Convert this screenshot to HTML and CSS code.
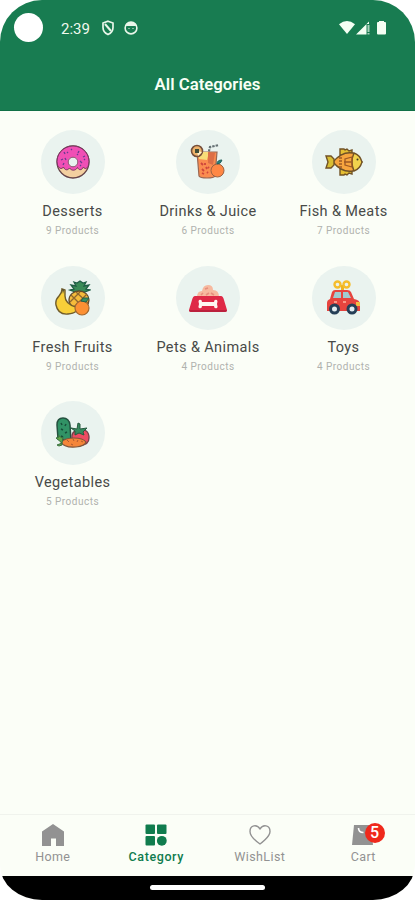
FILE: index.html
```html
<!DOCTYPE html>
<html lang="en">
<head>
<meta charset="utf-8">
<title>All Categories</title>
<link rel="stylesheet" href="styles.css">
</head>
<body>
<div class="phone">
  <header class="header">
    <div class="status">
      <span class="camera"></span>
      <span class="time">2:39</span>
      <svg class="shield" width="14" height="16" viewBox="0 0 14 16" fill="none" stroke="#e8f6e9" stroke-width="1.7"><path d="M7 1.2 12 3v4.5c0 3.2-2 5.7-5 7-3-1.3-5-3.8-5-7V3Z"/><path d="m4 4 6 7" stroke-width="2"/></svg>
      <svg class="face" width="14" height="14" viewBox="0 0 14 14"><circle cx="7" cy="7" r="5.9" fill="none" stroke="#e8f6e9" stroke-width="1.6"/><path d="M2 5Q2.500 1 7 1t5 4Z" fill="#e8f6e9"/><path d="M4.500 7.500h1M8.500 7.500h1" stroke="#e8f6e9"/></svg>
      <svg class="signals" width="50" height="16" viewBox="0 0 50 16" fill="#f5fff4"><path d="M1 4.200Q9 -2 17 4.200L9 14Z"/><path d="M18 14.500 31 1.500v2.500h-2.500v10.500Z"/><path d="M29.500 5H31.500v7h-2Zm0 8h2v1.500h-2Z" opacity=".65"/><path d="M41 1h5v1h1q1 0 1 1v10.500q0 1-1 1h-7q-1 0-1-1V3q0-1 1-1h1Z"/></svg>
    </div>
    <h1>All Categories</h1>
  </header>

  <main class="grid">
    <article class="item">
      <div class="disc"><svg width="36" height="36" viewBox="0 0 36 36"><circle cx="18" cy="18" r="16" fill="#f3cfa0" stroke="#654348" stroke-width="1.300"/><path d="M2.500 21C0 11 8 2 18 2s18 9 15.500 19c-1 4-4 4.500-5 2-2 4-5 3-6 .5-2 3.500-6 3.500-8 .5-2 3-5 2-6-1-2 3-5 1-6-2Z" fill="#f04fb5" stroke="#783660"/><circle cx="18" cy="18" r="4.800" fill="#e8f1ee" stroke="#8d5671"/><path d="m9 8 1 2m6-5 1 1m7 1-1 2m5 4 2-1M6 16l2-1m2-1 1 2m11-6 1 1m2 6 2 2M8 21l1-2m17 2-1 1M13 9l-1-1m17 7 1 1" stroke="#693d91" stroke-width="1.300"/></svg></div>
      <h2>Desserts</h2><p>9 Products</p>
    </article>
    <article class="item">
      <div class="disc"><svg width="36" height="36" viewBox="0 0 36 36"><path d="M18 11 20 3l9-2" fill="none" stroke="#667174" stroke-width="2.200" stroke-dasharray="2.500 1"/><path d="M7 8h20l-2 24q-1 2-8 2T9 32Z" fill="#fa8c50" stroke="#996854" stroke-width="1.200"/><path d="M8 8h11l-2 8-8-1Z" fill="#f8dc78"/><path d="m18 8 7 1-2 12-5-2Z" fill="#dd6e46"/><circle cx="7" cy="7" r="5.500" fill="#efb36b" stroke="#76503c" stroke-width="1.600"/><path d="m7 7 5 1-4 4Z" fill="#fff3d0"/><path d="M5 5h4v4H5Z" fill="#414d37"/><path d="m11 19 2 2m2-2v2m3 2 1 1m-7 1 2 2m2-4 1 2m-5 4 2 1m3-2 1 1" stroke="#cf463b" stroke-width="1.800"/><circle cx="27.500" cy="26.500" r="6.500" fill="#ff8744" stroke="#9c6142"/><path d="M27 20q0-4 5-4-1 4-5 4Z" fill="#26847e" stroke="#24605c"/></svg></div>
      <h2>Drinks &amp; Juice</h2><p>6 Products</p>
    </article>
    <article class="item">
      <div class="disc"><svg width="38" height="30" viewBox="0 0 38 30"><g stroke="#715226" stroke-width="1.400"><path d="M15 8V2h4l1 1 2-1 2 2 3-1v5ZM15 22v6h4l1-1 2 1 2-2 3 1v-5Z" fill="#e5be32"/><path d="M8 15Q17 4 28 6l5 4 4 5-4 5-5 4Q17 26 8 15Z" fill="#f7a53e"/><path d="M1 9h5l3 3v6l-3 3H1l2-6Z" fill="#d8be34"/><path d="M29 6q-4 9 0 18 6-2 8-9-2-7-8-9Z" fill="#f2d34d"/></g><path d="M27 10v10l-7-2v-6ZM26 15h-7M14 11h3m-3 3h3m-3 3h3m-3 3h3" fill="none" stroke="#9e5925" stroke-width="1.300"/><circle cx="32.500" cy="12.500" r="1" fill="#3c3b27"/></svg></div>
      <h2>Fish &amp; Meats</h2><p>7 Products</p>
    </article>
    <article class="item">
      <div class="disc"><svg width="36" height="36" viewBox="0 0 36 36"><path d="m23 13-8-3 4-1-3-4 5 1-2-4 3 1 3-2 3 2 3-1-2 4 5-1-3 4 4 1-8 3Z" fill="#398b57" stroke="#205e46" stroke-width="1.300"/><ellipse cx="24" cy="20" rx="10" ry="9" fill="#f5bb3b" stroke="#60492a" stroke-width="1.300"/><path d="m16 15 11 11m-6-14 12 11M15 22l10-10m-6 15 13-13" stroke="#8f672e" stroke-width="1.300"/><path d="m7 9 3 1v6q0 8 11 11 3 6-8 7-10 1-12-9-1-5 3-9 3-3 3-7Z" fill="#f8cf39" stroke="#705c2b" stroke-width="1.400"/><path d="m7 9 2 1-1 4Z" fill="#514c34"/><circle cx="27" cy="28" r="7" fill="#fc9033" stroke="#a16831" stroke-width="1.200"/><path d="m26 21 2-3h6l-3 4Z" fill="#369265" stroke="#225f4a"/></svg></div>
      <h2>Fresh Fruits</h2><p>9 Products</p>
    </article>
    <article class="item">
      <div class="disc"><svg width="38" height="32" viewBox="0 0 38 32"><path d="M8 15q0-6 5-6 1-6 6-6t5 5q6 0 6 7Z" fill="#f7b99f"/><path d="m12 13 2-2m3 2 3-2m-4-4 3-1m3 5 3 2" stroke="#e68e7d" stroke-width="1.600"/><path d="M6 14h26q2 0 3 4l3 10q0 2-2 2H2q-2 0-2-2l3-10q1-4 3-4Z" fill="#df2946"/><path d="M0 28h38q0 2-2 2H2q-2 0-2-2Z" fill="#bb203d"/><path d="M13 20h12q0-3 3-2 1 1 0 4 1 3 0 4-3 1-3-2H13q0 3-3 2-1-1 0-4-1-3 0-4 3-1 3 2Z" fill="#fff7f1"/></svg></div>
      <h2>Pets &amp; Animals</h2><p>4 Products</p>
    </article>
    <article class="item">
      <div class="disc"><svg width="36" height="36" viewBox="0 0 36 36"><path d="M15 12V5h3v7Z" fill="#edb323"/><circle cx="11.500" cy="4.500" r="3" fill="none" stroke="#f5bd2c" stroke-width="2.400"/><circle cx="20.500" cy="4.500" r="3" fill="none" stroke="#f5bd2c" stroke-width="2.400"/><path d="M1 31V23q0-3 3-4l2-7q1-2 3-2h12q3 0 4 2l3 7q6 1 6 5v7Z" fill="#e6443e"/><path d="m7 18 2-6h6v6Zm10-6h5l3 6h-8Z" fill="#9fccd1"/><path d="M8 22h3m6 0h3" stroke="#ffb49e" stroke-width="1.500"/><path d="M30 22h4v4h-4Z" fill="#f4bf44"/><g fill="#e4edf1" stroke="#263f57" stroke-width="3"><circle cx="8.500" cy="29" r="4"/><circle cx="26" cy="29" r="4"/></g></svg></div>
      <h2>Toys</h2><p>4 Products</p>
    </article>
    <article class="item">
      <div class="disc"><svg width="36" height="36" viewBox="0 0 36 36"><path d="M3 24 2 10q0-7 6-7t7 7l1 16Z" fill="#319265" stroke="#24513f" stroke-width="1.500"/><path d="m6 8 1 2m4-1-1 2m-4 3 2 1m4 2-2 1m-4 3 2 1" stroke="#174e39" stroke-width="1.500"/><path d="M17 24q-1-8 6-9 11-2 11 8 0 7-9 7-6 0-8-6Z" fill="#ed4c62" stroke="#793e48" stroke-width="1.300"/><path d="m16 13 6 1 1-6 2 1v5l7-1-4 4 1 3-5-2-4 2v-4Z" fill="#378a5e" stroke="#285940"/><path d="M6 27q4-4 13-4 9 0 12 4-1 4-10 5-12 1-15-5Z" fill="#f58539" stroke="#80553b" stroke-width="1.200"/><path d="m12 25 2 2m4-3 1 2m4-1-1 2m4-1 2 1m-12 2 2 1" stroke="#ae5931"/><path d="m7 28-6-5 3-1-1-2 4 3 1-1Zm0 0-5 2 2 1 3-1Z" fill="#61a447" stroke="#3c7341"/></svg></div>
      <h2>Vegetables</h2><p>5 Products</p>
    </article>
  </main>

  <nav class="nav">
    <div class="tab"><svg width="26" height="26" viewBox="0 0 26 26" fill="#929292"><path d="M13 2 24 9.500V24h-8v-7.500h-5V24H2V9.500Z"/></svg><span>Home</span></div>
    <div class="tab active"><svg width="26" height="26" viewBox="0 0 26 26" fill="#107c4e"><rect x="2.500" y="2.500" width="9.500" height="9.500" rx="1"/><rect x="14" y="2.500" width="9.500" height="9.500" rx="1"/><rect x="2.500" y="14" width="9.500" height="9.500" rx="1"/><circle cx="18.800" cy="18.800" r="4.900"/></svg><span>Category</span></div>
    <div class="tab"><svg width="26" height="26" viewBox="0 0 26 26" fill="none" stroke="#929292" stroke-width="1.400"><path d="M13 22Q3 15 3 9.500C3 3 10 2 13 7c3-5 10-4 10 2.500C23 15 13 22 13 22Z"/></svg><span>WishList</span></div>
    <div class="tab cart"><svg width="26" height="26" viewBox="0 0 26 26"><path d="M4 3h17l2 20H2Z" fill="#929292"/><path d="M8.500 6q0 4.500 5 4.500" fill="none" stroke="#fff" stroke-width="1.600"/></svg><b class="badge">5</b><span>Cart</span></div>
  </nav>
  <footer class="gesture"><i></i></footer>
</div>
</body>
</html>
```
FILE: styles.css
```css
* { box-sizing: border-box; }
body { margin: 0; background: #fff; font-family: Roboto, sans-serif; }
h1, h2, p { margin: 0; }
svg { display: block; flex: none; }
.phone { width: 415px; height: 900px; display: flex; flex-direction: column; overflow: hidden; border-radius: 42px / 42px 42px 35px 35px; background: #fbfef7; }
.header { height: 111px; flex: none; background: #187c51; border-bottom: 1px solid #107047; }
.status { height: 56px; display: flex; align-items: center; padding: 0 27px 0 14px; }
.camera { width: 29px; height: 29px; border-radius: 50%; background: #fff; margin-top: -2px; }
.time { margin-left: 18px; width: 29px; color: #eff9ee; font-size: 15px; line-height: 18px; padding-top: 1px; }
.shield { margin-left: 11px; }
.face { margin-left: 9px; }
.signals { margin-left: auto; }
.header h1 { color: #f8fff5; font-size: 16.8px; font-weight: 600; line-height: 22px; margin-top: 17px; text-align: center; }
.grid { flex: 1; display: grid; grid-template-columns: repeat(3, 135.5px); grid-auto-rows: 135.7px; align-content: start; justify-content: center; padding: 19px 0 0 1px; }
.item { display: flex; flex-direction: column; align-items: center; white-space: nowrap; }
.disc { width: 64px; height: 64px; flex: none; display: flex; align-items: center; justify-content: center; border-radius: 50%; background: #eaf3ef; }
.item h2 { margin-top: 8px; color: #484a48; font-size: 14.5px; line-height: 20px; font-weight: 400; letter-spacing: .38px; }
.item p { margin-top: 1px; color: #b0b2ae; font-size: 10px; line-height: 16px; letter-spacing: .5px; }
.nav { height: 62px; flex: none; display: grid; grid-template-columns: repeat(4, 1fr); border-top: 1px solid #f0f3ed; padding-left: 1px; }
.tab { display: flex; flex-direction: column; align-items: center; padding-top: 7px; color: #929292; font-size: 12.5px; line-height: 16px; letter-spacing: .4px; }
.tab span { margin-top: 1px; }
.active { color: #107c4e; font-weight: 500; letter-spacing: .6px; }
.cart { position: relative; }
.badge { position: absolute; left: 53px; top: 8px; width: 20px; height: 20px; border-radius: 50%; background: #ef291c; color: #fff; text-align: center; font-size: 16px; line-height: 20px; font-weight: 500; letter-spacing: 0; }
.gesture { height: 24px; flex: none; background: #000; display: flex; justify-content: center; padding-top: 9px; }
.gesture i { width: 115px; height: 5px; border-radius: 3px; background: #fff; }
```
